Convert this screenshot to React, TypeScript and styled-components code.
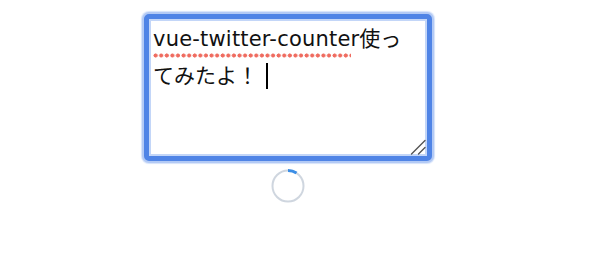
import React from 'react'
import styled, { createGlobalStyle } from 'styled-components'

const GlobalStyle = createGlobalStyle`
    html, body {
        margin: 0;
        padding: 0;
        background: #ffffff;
    }
    body {
        font-family: "Noto Sans CJK JP", "Noto Sans", sans-serif;
        color: #111;
    }
`

const Page = styled.div`
    display: flex;
    flex-direction: column;
    align-items: center;
    width: 288px;
    padding: 14px 0 0 144px;
`

const TextBox = styled.div`
    position: relative;
    box-sizing: border-box;
    width: 288px;
    height: 147px;
    padding: 0 0 0 4px;
    border: 5px solid #4f84e6;
    border-radius: 5px;
    background: #fff;
    box-shadow: 0 0 0 2px #b3caf5, 0 0 1px 3px #d6e3fa, inset 0 0 0 2px #c3d6f8;
    font-size: 21px;
`

const Line = styled.div`
    white-space: nowrap;
    line-height: 37px;
    height: 37px;
`

const Misspelled = styled.span`
    position: relative;
    font-family: "DejaVu Sans", "Noto Sans CJK JP", sans-serif;
    letter-spacing: 0.2px;

    &::after {
        content: '';
        position: absolute;
        left: 0;
        right: 8px;
        bottom: -7px;
        height: 5px;
        background-image: radial-gradient(circle at 2.5px 2.5px, #ef6c60 0, #ef6c60 1.8px, transparent 2.3px);
        background-repeat: repeat-x;
        background-size: 5.6px 5px;
    }
`

const Caret = styled.span`
    display: inline-block;
    width: 2px;
    height: 26px;
    margin-left: 8px;
    background: #000;
    vertical-align: -6px;
`

const Grip = styled.svg`
    position: absolute;
    right: 1px;
    bottom: 1px;
`

const Spinner = styled.svg`
    margin-top: 7px;
`

export default function App() {
    return (
        <>
            <GlobalStyle />
            <Page>
                <TextBox role='textbox'>
                    <Line>
                        <Misspelled>vue-twitter-counter</Misspelled>使っ
                    </Line>
                    <Line>
                        てみたよ！<Caret />
                    </Line>
                    <Grip width='16' height='16' viewBox='0 0 16 16'>
                        <path d='M1.5 15 L15 1.5 M8.5 15 L15 8.5' stroke='#555' strokeWidth='1.4' strokeLinecap='round' />
                    </Grip>
                </TextBox>
                <Spinner width='36' height='36' viewBox='0 0 36 36'>
                    <circle cx='18' cy='18' r='15.5' fill='none' stroke='#cfd6df' strokeWidth='2' />
                    <path d='M18 2.5 A15.5 15.5 0 0 1 26.5 5' fill='none' stroke='#3b8ee6' strokeWidth='3' />
                </Spinner>
            </Page>
        </>
    )
}
